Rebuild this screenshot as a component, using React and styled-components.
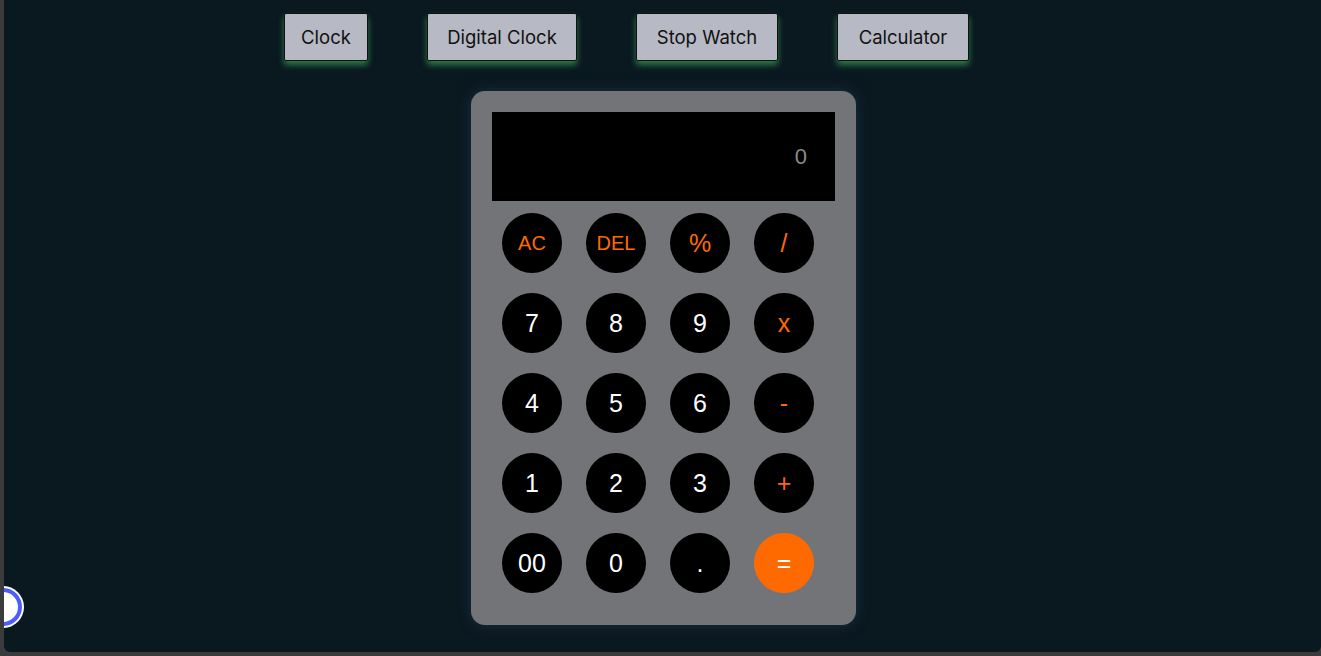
import React from 'react';
import styled, { createGlobalStyle } from 'styled-components';

const GlobalStyle = createGlobalStyle`
  html, body {
    margin: 0;
    padding: 0;
    background: #3b3b3d;
    height: 656px;
    overflow: hidden;
  }
`;

const Screen = styled.div`
  position: relative;
  margin-left: 4px;
  height: 652px;
  background: #0a1820;
  border-radius: 0 0 6px 6px;
  overflow: hidden;
  font-family: Inter, "Noto Sans", sans-serif;
`;

const Nav = styled.nav`
  display: flex;
  gap: 59px;
  padding: 13px 0 0 280px;
`;

const NavButton = styled.button`
  width: ${(p) => p.$w}px;
  height: 48px;
  padding: 0;
  background: #b7b9c4;
  color: #111;
  border: 1px solid #111;
  border-radius: 2px;
  font-family: Inter, "Noto Sans", sans-serif;
  font-size: 18.5px;
  box-shadow: 0 4px 6px rgba(50, 150, 80, 0.8);
  cursor: pointer;
`;

const Calc = styled.div`
  width: 343px;
  margin: 30px 0 0 467px;
  padding: 21px 21px 32px;
  background: #727478;
  border-radius: 14px;
  box-shadow: 0 0 14px rgba(30, 60, 80, 0.7);
`;

const Display = styled.div`
  height: 89px;
  background: #000;
  display: flex;
  align-items: center;
  justify-content: flex-end;
  padding-right: 28px;
  color: #8a8a8a;
  font-family: "Liberation Sans", Arial, sans-serif;
  font-size: 22px;
`;

const Keys = styled.div`
  display: grid;
  grid-template-columns: repeat(4, 60px);
  column-gap: 24px;
  row-gap: 20px;
  margin: 12px 0 0 10px;
`;

const Key = styled.button`
  width: 60px;
  height: 60px;
  border-radius: 50%;
  border: none;
  padding: 0;
  background: ${(p) => (p.$equals ? '#ff6a00' : '#000')};
  color: ${(p) => (p.$op && !p.$equals ? '#ff6a00' : '#fff')};
  font-family: "Liberation Sans", Arial, sans-serif;
  font-size: ${(p) => (p.$small ? 20 : 25)}px;
  cursor: pointer;
`;

const Dot = styled.div`
  position: absolute;
  left: -20px;
  top: 588px;
  width: 30px;
  height: 30px;
  border-radius: 50%;
  background: #fff;
  border: 4px solid #4d5cff;
  box-shadow: 0 0 0 2px #fff;
`;

const tabs = [
  ['Clock', 84],
  ['Digital Clock', 150],
  ['Stop Watch', 142],
  ['Calculator', 132],
];

const keys = [
  ['AC', 'op', true], ['DEL', 'op', true], ['%', 'op'], ['/', 'op'],
  ['7'], ['8'], ['9'], ['x', 'op'],
  ['4'], ['5'], ['6'], ['-', 'op'],
  ['1'], ['2'], ['3'], ['+', 'op'],
  ['00'], ['0'], ['.'], ['=', 'eq'],
];

export default function App() {
  return (
    <>
      <GlobalStyle />
      <Screen>
        <Nav>
          {tabs.map(([label, w]) => (
            <NavButton key={label} $w={w}>{label}</NavButton>
          ))}
        </Nav>
        <Calc>
          <Display>0</Display>
          <Keys>
            {keys.map(([label, kind, small]) => (
              <Key
                key={label}
                $op={kind === 'op' || kind === 'eq'}
                $equals={kind === 'eq'}
                $small={small}
              >
                {label}
              </Key>
            ))}
          </Keys>
        </Calc>
        <Dot />
      </Screen>
    </>
  );
}
